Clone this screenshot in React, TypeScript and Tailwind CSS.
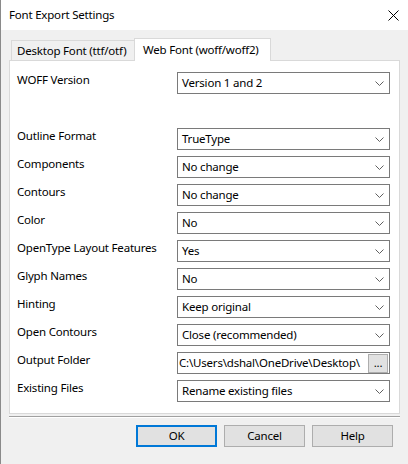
import React from "react";

type Row = { label: string; value?: string; kind?: "select" | "path" | "blank" };

const rows: Row[] = [
  { label: "WOFF Version", value: "Version 1 and 2" },
  { label: "", kind: "blank" },
  { label: "Outline Format", value: "TrueType" },
  { label: "Components", value: "No change" },
  { label: "Contours", value: "No change" },
  { label: "Color", value: "No" },
  { label: "OpenType Layout Features", value: "Yes" },
  { label: "Glyph Names", value: "No" },
  { label: "Hinting", value: "Keep original" },
  { label: "Open Contours", value: "Close (recommended)" },
  { label: "Output Folder", value: "C:\\Users\\dshal\\OneDrive\\Desktop\\", kind: "path" },
  { label: "Existing Files", value: "Rename existing files" },
];

const Chevron = () => (
  <svg width="9" height="5" viewBox="0 0 9 5" className="shrink-0">
    <path d="M0.5 0.5 L4.5 4.5 L8.5 0.5" fill="none" stroke="#606060" strokeWidth="1" />
  </svg>
);

const Select = ({ value }: { value: string }) => (
  <div className="flex h-[22px] w-[213px] items-center justify-between border border-[#7a7a7a] bg-white pl-[4px] pr-[5px]">
    <span className="whitespace-nowrap leading-4">{value}</span>
    <Chevron />
  </div>
);

const PathInput = ({ value }: { value: string }) => (
  <div className="flex h-[22px] w-[213px] items-center gap-[4px] border border-[#7a7a7a] bg-white pl-[1px] pr-[1px]">
    <span className="min-w-0 flex-1 whitespace-nowrap leading-4">{value}</span>
    <div className="flex h-[19px] w-[20px] shrink-0 items-start justify-center border border-[#adadad] bg-[#e1e1e1] leading-4">
      ...
    </div>
  </div>
);

const Button = ({ label, primary }: { label: string; primary?: boolean }) => (
  <div
    className={
      primary
        ? "flex h-[22px] w-[81px] items-center justify-center border-2 border-[#0078d7] bg-[#e1e1e1]"
        : "flex h-[22px] w-[81px] items-center justify-center border border-[#adadad] bg-[#e1e1e1]"
    }
  >
    {label}
  </div>
);

export default function App() {
  return (
    <div
      className="flex h-[464px] w-[408px] flex-col border-l border-[#8a8a8a] bg-[#f0f0f0] text-[11.5px] tracking-[-0.2px] text-black"
      style={{ fontFamily: '"Noto Sans", "Open Sans", sans-serif' }}
    >
      {/* title bar */}
      <div className="flex h-[30px] items-center justify-between bg-white pl-[8px] pr-[9px]">
        <span className="leading-4">Font Export Settings</span>
        <svg width="11" height="11" viewBox="0 0 11 11">
          <path d="M0.5 0.5 L10.5 10.5 M10.5 0.5 L0.5 10.5" stroke="#000" strokeWidth="1" />
        </svg>
      </div>

      {/* tabs */}
      <div className="ml-[8px] mt-[8px] w-[391px]">
        <div className="flex items-end pl-[2px]">
          <div className="flex h-[20px] w-[124px] items-center border border-b-0 border-[#d9d9d9] bg-[#f0f0f0] pl-[5px]">
            <span className="whitespace-nowrap leading-4">Desktop Font (ttf/otf)</span>
          </div>
          <div className="relative z-10 -mb-px -ml-px flex h-[23px] w-[137px] items-start border border-b-0 border-[#d9d9d9] bg-white pl-[8px] pt-[3px]">
            <span className="whitespace-nowrap leading-4">Web Font (woff/woff2)</span>
          </div>
        </div>

        <div className="flex h-[354px] flex-col gap-[6px] border border-[#d9d9d9] bg-white pl-[7px] pr-[9px] pt-[11px]">
          {rows.map((r, i) => (
            <div key={i} className="flex h-[22px] items-start">
              <div className="w-[160px] whitespace-nowrap leading-4">{r.label}</div>
              {r.kind === "blank" ? null : r.kind === "path" ? (
                <PathInput value={r.value!} />
              ) : (
                <Select value={r.value!} />
              )}
            </div>
          ))}
        </div>

        <div className="mt-[2px] h-[2px] border-t border-b border-t-[#a0a0a0] border-b-white" />

        <div className="mt-[7px] flex justify-end gap-[7px] pr-[7px]">
          <Button label="OK" primary />
          <Button label="Cancel" />
          <Button label="Help" />
        </div>
      </div>
    </div>
  );
}
